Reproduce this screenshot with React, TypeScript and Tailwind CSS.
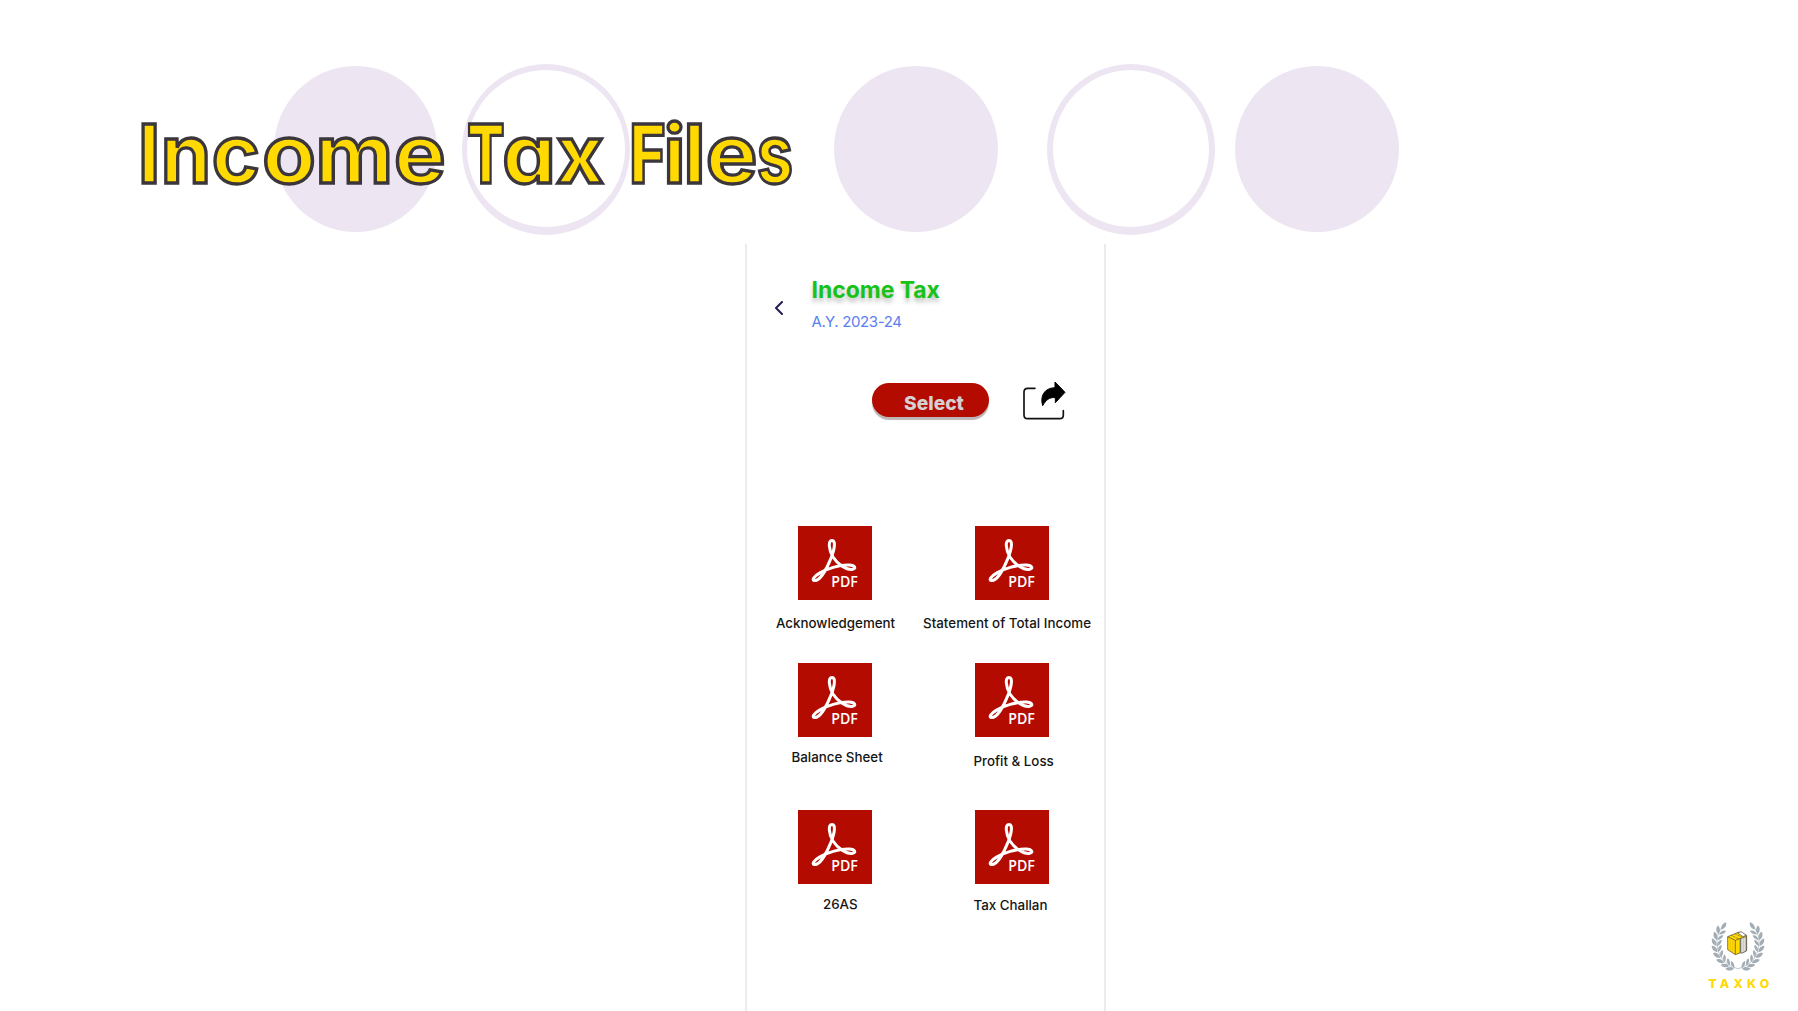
import React from "react";

function PdfIcon() {
  return (
    <svg viewBox="40 34 220 220" className="block size-[74px]" aria-label="PDF file">
      <rect x="40" y="34" width="220" height="220" fill="#b30b00" />
      <path
        d="M141 77C129 77 131 103 144 126C158 148 184 165 201 163C214 161 211 151 192 150C162 149 125 162 104 174C87 184 81 194 88 196C105 200 126 160 138 130C149 102 153 77 141 77Z"
        fill="none"
        stroke="#fff"
        strokeWidth="9"
        strokeLinejoin="round"
      />
      <text x="139" y="214" fontFamily="Open Sans" fontWeight="600" fontSize="46" textLength="79" lengthAdjust="spacingAndGlyphs" fill="#fff" textRendering="geometricPrecision">
        PDF
      </text>
    </svg>
  );
}

function ShareIcon() {
  return (
    <svg viewBox="876 432 136 124" className="block h-[41.33px] w-[45.33px]" fill="none">
      <path d="M915 457H893Q882 457 882 468V537Q882 548 893 548H989Q1000 548 1000 537V524" stroke="#111" strokeWidth="5" strokeLinecap="round" />
      <path d="M975 438L1005 469L976 500V485C958 483 948 492 938 509C930 482 941 456 975 455Z" fill="#000" stroke="#000" strokeWidth="3" strokeLinejoin="round" />
    </svg>
  );
}

const leaves = [
  [128, 201, 20], [114, 193, 30], [100, 182, 42], [89, 167, 55], [82, 150, 68], [79, 132, 82], [81, 114, 96], [87, 97, 108],
];

function Branch() {
  return (
    <g fill="#a3adb5">
      <path d="M143 204C105 196 77 163 80 119C81 104 86 90 97 77" fill="none" stroke="#a3adb5" strokeWidth="2" />
      {leaves.map(([x, y, a]) => (
        <g key={x} transform={`translate(${x} ${y}) rotate(${a})`}>
          <path d="M4 2C-2 13 -13 15 -20 11C-17 3 -6 -3 4 2Z" />
          <path d="M4 -2C-3 -10 -12 -13 -18 -10C-16 -3 -6 1 4 -2Z" transform="rotate(26)" />
        </g>
      ))}
      <path d="M93 87C91 77 97 68 107 65C110 74 104 84 93 87Z" />
    </g>
  );
}

function TaxkoLogo() {
  return (
    <svg viewBox="50 55 190 215" className="block h-[71.67px] w-[63.33px]">
      <Branch />
      <g transform="translate(286 0) scale(-1 1)">
        <Branch />
      </g>
      <path d="M112 108L146 94L169 105V150L135 162L112 147Z" fill="#ffd900" stroke="#4a453a" strokeWidth="2" />
      <path d="M112 108L135 119V161M135 119L150 113V156" fill="none" stroke="#4a453a" strokeWidth="2" />
      <path d="M123 104L146 115M134 99L156 110" stroke="#4a453a" strokeWidth="2" strokeDasharray="3 2" />
      <path d="M150 114L168 107V151L155 158L150 155Z" fill="#c8c8c8" stroke="#4a453a" strokeWidth="2" />
      <path d="M142 97L152 93L168 103L158 108Z" fill="#fff" stroke="#4a453a" strokeWidth="2" />
      <path d="M157 114V153M163 112V149" stroke="#eee" strokeWidth="2" />
      <path d="M120 116V148M127 119V153" stroke="#e8bd00" strokeWidth="2" />
      <text x="54" y="261" fontFamily="Inter" fontWeight="800" fontSize="37" textLength="183" fill="#ffd900" textRendering="geometricPrecision">
        TAXKO
      </text>
    </svg>
  );
}

function FileCell({ name, label }: { name: string; label: string }) {
  return (
    <button className="block w-[177px] shrink-0 cursor-pointer pl-[22px] text-left">
      <PdfIcon />
      <span className={`block text-[13.33px] leading-5 font-medium whitespace-nowrap text-[#151515] ${label}`}>{name}</span>
    </button>
  );
}

const cell = "inline-flex h-[100px] shrink-0 justify-center";

export default function App() {
  return (
    <main className="relative h-[1011px] w-[1798px] overflow-hidden bg-white font-['Inter',sans-serif]">
      <div className="absolute inset-x-0 top-[64px] flex h-[171px] items-start" aria-hidden="true">
        <div className="mt-[2px] ml-[274px] h-[166px] w-[163px] shrink-0 rounded-[50%] bg-[#ede6f2]" />
        <div className="ml-[25px] h-[171px] w-[168px] shrink-0 rounded-[50%] border-x-[5px] border-t-[6.5px] border-b-[8px] border-[#ede6f2]" />
        <div className="mt-[2px] ml-[204px] h-[166px] w-[164px] shrink-0 rounded-[50%] bg-[#ede6f2]" />
        <div className="ml-[49px] h-[171px] w-[168px] shrink-0 rounded-[50%] border-x-[6px] border-t-[6.5px] border-b-[8px] border-[#ede6f2]" />
        <div className="mt-[2px] ml-[20px] h-[166px] w-[164px] shrink-0 rounded-[50%] bg-[#ede6f2]" />
      </div>

      <header className="relative h-[244px] pt-[104px]">
        <h1 className="flex pl-[141.5px] text-[81px] leading-[100px] font-bold text-[#ffd900] [-webkit-text-stroke:3.3px_#3a363c] [font-feature-settings:'cv11']">
          <span className="flex">
            <span className={`${cell} w-[15px]`}>I</span>
            <span className={`${cell} ml-[8px] w-[43px]`}>n</span>
            <span className={`${cell} ml-[4px] w-[47.5px] scale-x-[1.01]`}>c</span>
            <span className={`${cell} ml-[5px] w-[50px] scale-x-[1.08]`}>o</span>
            <span className={`${cell} ml-[5px] w-[70.5px] scale-x-[1.05]`}>m</span>
            <span className={`${cell} ml-[5px] w-[49.5px] scale-x-[1.07]`}>e</span>
          </span>
          <span className="ml-[23.5px] flex">
            <span className={`${cell} w-[36px] scale-x-[0.68] font-extrabold`}>T</span>
            <span className={`${cell} ml-[1px] w-[48px] scale-x-[1.05]`}>a</span>
            <span className={`${cell} ml-[3.5px] w-[48px] scale-x-[1.02]`}>x</span>
          </span>
          <span className="ml-[26.5px] flex">
            <span className={`${cell} w-[33px] scale-x-[0.76] font-extrabold`}>F</span>
            <span className={`${cell} ml-[2px] w-[18px]`}>i</span>
            <span className={`${cell} ml-[4px] w-[14px]`}>l</span>
            <span className={`${cell} ml-[5px] w-[49px] scale-x-[1.07]`}>e</span>
            <span className={`${cell} ml-[2.5px] w-[34px] scale-x-[0.8]`}>s</span>
          </span>
        </h1>
      </header>

      <section className="ml-[745px] h-[767px] w-[361px] border-x-2 border-[#ececec]">
        <div className="flex h-[136px] pl-[28px]">
          <svg viewBox="0 0 8 14" className="mt-[56.5px] h-[14px] w-[8px]" fill="none" stroke="#25204f" strokeWidth="2" strokeLinecap="round" strokeLinejoin="round">
            <path d="M7 1L1 7L7 13" />
          </svg>
          <div className="ml-[28.5px] pt-[31px]">
            <h2 className="text-[23px] leading-[30px] font-bold tracking-[-0.05px] text-[#19c219] [text-shadow:0_4px_4px_rgb(0_0_0/0.25)]">Income Tax</h2>
            <p className="mt-[7px] text-[15px] leading-5 tracking-[-0.35px] text-[#5a80f0]">A.Y. 2023-24</p>
          </div>
        </div>
        <div className="flex h-[146px] pl-[125px]">
          <button className="mt-[3px] h-[34px] w-[117px] rounded-full bg-[#b30b00] pt-[5px] pl-[7px] text-[19.2px] leading-[30px] font-extrabold text-[#d5d0d3] shadow-[0_3px_1px_#bdb5b5]">
            Select
          </button>
          <button className="ml-[32.5px] -mt-[0.5px] self-start" aria-label="Share">
            <ShareIcon />
          </button>
        </div>
        <div className="flex pl-[29px]">
          <FileCell name="Acknowledgement" label="mt-[13px] -ml-[22px]" />
          <FileCell name="Statement of Total Income" label="mt-[13px] -ml-[52px] tracking-[0.03px]" />
        </div>
        <div className="mt-[30px] flex items-start pl-[29px]">
          <FileCell name="Balance Sheet" label="mt-[10px] -ml-[6.5px]" />
          <FileCell name="Profit & Loss" label="mt-[14px] -ml-[1.5px]" />
        </div>
        <div className="mt-[39px] flex items-start pl-[29px]">
          <FileCell name="26AS" label="mt-[10px] ml-[25px]" />
          <FileCell name="Tax Challan" label="mt-[11px] -ml-[1.5px]" />
        </div>
      </section>

      <div className="absolute right-[28px] bottom-[20.5px]">
        <TaxkoLogo />
      </div>
    </main>
  );
}
